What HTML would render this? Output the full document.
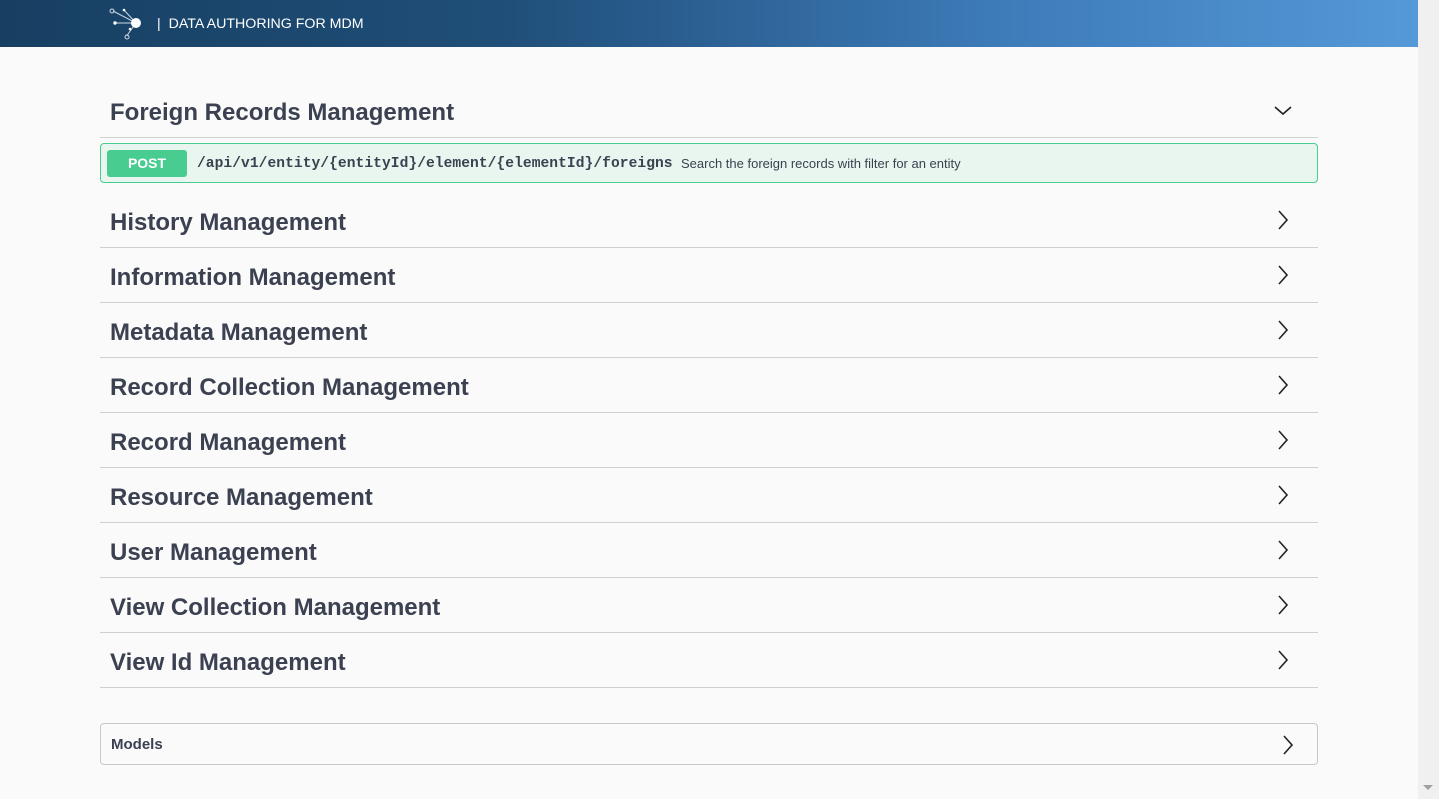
<!DOCTYPE html>
<html><head><style>
body{margin:0;width:1439px;height:799px;background:#fafafa;font-family:"Liberation Sans",sans-serif;overflow:hidden;position:relative}
.hdr{position:absolute;left:0;top:0;width:1418px;height:47px;background:linear-gradient(90deg,#173f62 0%,#1f4e78 35%,#3d7ab8 70%,#5599d8 100%)}
.hdr .t{position:absolute;left:157px;top:16px;color:#fff;font-size:14.2px}
.sb{position:absolute;left:1418px;top:0;width:21px;height:799px;background:#f0f0f0}
.sec{position:absolute;left:100px;width:1218px;height:54px;border-bottom:1px solid #d0d0d0}
.sec span{position:absolute;left:10px;top:16px;font-size:24px;font-weight:bold;color:#3b4151}
.sec svg{position:absolute;left:1174px;top:16px}
.post{position:absolute;left:100px;top:143px;width:1216px;height:38px;background:#e8f6ef;border:1px solid #49cc90;border-radius:4px}
.badge{position:absolute;left:6px;top:6px;width:80px;height:27px;background:#49cc90;border-radius:3px;color:#fff;font-weight:bold;font-size:14px;text-align:center;line-height:26px}
.path{position:absolute;left:96px;top:12px;font-family:"Liberation Mono",monospace;font-weight:bold;font-size:14.6px;letter-spacing:0.05px;color:#3b4151}
.desc{position:absolute;left:580px;top:12px;font-size:13px;color:#3b4151}
.models{position:absolute;left:100px;top:723px;width:1216px;height:40px;border:1px solid #c8c8c8;border-radius:4px}
.models span{position:absolute;left:10px;top:12px;font-size:15px;font-weight:bold;color:#3b4151}
</style></head><body>
<div class="hdr">
<svg width="40" height="40" style="position:absolute;left:108px;top:5px" viewBox="0 0 40 40">
<g stroke="#cfd9e4" stroke-width="1" fill="none">
<line x1="5" y1="6" x2="28" y2="18"/><line x1="16" y1="5" x2="28" y2="18"/><line x1="7" y1="18" x2="28" y2="18"/><line x1="20" y1="29" x2="28" y2="18"/><line x1="20" y1="29" x2="19" y2="31"/>
<circle cx="4" cy="6" r="2"/><circle cx="19" cy="32" r="2"/></g>
<circle cx="28" cy="18" r="5" fill="#fff"/><circle cx="7" cy="18" r="1.7" fill="#fff"/><circle cx="16" cy="5" r="1.3" fill="#fff"/><circle cx="22" cy="24" r="1.3" fill="#fff"/>
</svg>
<div class="t">|&nbsp;&nbsp;DATA AUTHORING FOR MDM</div></div>
<div class="sb"><svg width="21" height="10" style="position:absolute;top:783px"><path d="M5 2h10l-5 5z" fill="#a0a0a0"/></svg></div>

<div class="sec" style="top:83px"><span>Foreign Records Management</span><svg width="18" height="18" viewBox="0 0 18 18" style="top:19px"><path d="M1 5l8 7 8-7" stroke="#222" stroke-width="1.6" fill="none"/></svg></div>
<div class="post"><div class="badge">POST</div><div class="path">/api/v1/entity/{entityId}/element/{elementId}/foreigns</div><div class="desc">Search the foreign records with filter for an entity</div></div>

<div class="sec" style="top:193px"><span>History Management</span><svg width="18" height="22" viewBox="0 0 18 22"><path d="M5 2l8 9-8 9" stroke="#222" stroke-width="1.6" fill="none"/></svg></div>
<div class="sec" style="top:248px"><span>Information Management</span><svg width="18" height="22" viewBox="0 0 18 22"><path d="M5 2l8 9-8 9" stroke="#222" stroke-width="1.6" fill="none"/></svg></div>
<div class="sec" style="top:303px"><span>Metadata Management</span><svg width="18" height="22" viewBox="0 0 18 22"><path d="M5 2l8 9-8 9" stroke="#222" stroke-width="1.6" fill="none"/></svg></div>
<div class="sec" style="top:358px"><span>Record Collection Management</span><svg width="18" height="22" viewBox="0 0 18 22"><path d="M5 2l8 9-8 9" stroke="#222" stroke-width="1.6" fill="none"/></svg></div>
<div class="sec" style="top:413px"><span>Record Management</span><svg width="18" height="22" viewBox="0 0 18 22"><path d="M5 2l8 9-8 9" stroke="#222" stroke-width="1.6" fill="none"/></svg></div>
<div class="sec" style="top:468px"><span>Resource Management</span><svg width="18" height="22" viewBox="0 0 18 22"><path d="M5 2l8 9-8 9" stroke="#222" stroke-width="1.6" fill="none"/></svg></div>
<div class="sec" style="top:523px"><span>User Management</span><svg width="18" height="22" viewBox="0 0 18 22"><path d="M5 2l8 9-8 9" stroke="#222" stroke-width="1.6" fill="none"/></svg></div>
<div class="sec" style="top:578px"><span>View Collection Management</span><svg width="18" height="22" viewBox="0 0 18 22"><path d="M5 2l8 9-8 9" stroke="#222" stroke-width="1.6" fill="none"/></svg></div>
<div class="sec" style="top:633px"><span>View Id Management</span><svg width="18" height="22" viewBox="0 0 18 22"><path d="M5 2l8 9-8 9" stroke="#222" stroke-width="1.6" fill="none"/></svg></div>

<div class="models"><span>Models</span><svg width="18" height="22" viewBox="0 0 18 22" style="position:absolute;left:1178px;top:10px"><path d="M5 2l8 9-8 9" stroke="#222" stroke-width="1.6" fill="none"/></svg></div>
</body></html>
